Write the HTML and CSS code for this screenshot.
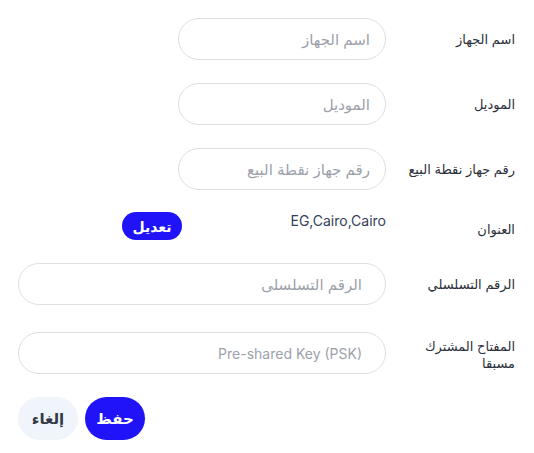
FILE: index.html
```html
<!DOCTYPE html>
<html lang="ar" dir="rtl">
<head>
<meta charset="utf-8">
<link rel="stylesheet" href="styles.css">
</head>
<body>
<form class="form">
  <div class="row">
    <label class="label">اسم الجهاز</label>
    <div class="field"><input class="input input-short" placeholder="اسم الجهاز"></div>
  </div>
  <div class="row">
    <label class="label">الموديل</label>
    <div class="field"><input class="input input-short" placeholder="الموديل"></div>
  </div>
  <div class="row">
    <label class="label">رقم جهاز نقطة البيع</label>
    <div class="field"><input class="input input-short" placeholder="رقم جهاز نقطة البيع"></div>
  </div>
  <div class="row row-address">
    <label class="label label-address">العنوان</label>
    <div class="address">
      <span class="address-text" dir="ltr">EG,Cairo,Cairo</span>
      <button type="button" class="btn-edit">تعديل</button>
    </div>
  </div>
  <div class="row">
    <label class="label">الرقم التسلسلي</label>
    <div class="field"><input class="input" placeholder="الرقم التسلسلى"></div>
  </div>
  <div class="row row-psk">
    <label class="label label-multi">المفتاح المشترك مسبقا</label>
    <div class="field"><input class="input input-latin" placeholder="Pre-shared Key (PSK)"></div>
  </div>
  <div class="actions">
    <button type="button" class="btn btn-primary">حفظ</button>
    <button type="button" class="btn btn-secondary">إلغاء</button>
  </div>
</form>
</body>
</html>
```
FILE: styles.css
```css
* { box-sizing: border-box; }
html, body { margin: 0; background: #ffffff; }
body {
  font-family: "Inter", "Noto Sans", "DejaVu Sans", sans-serif;
  color: #2b2f3a;
}
.form {
  padding: 18px 19px 0 18px;
  display: flex;
  flex-direction: column;
  gap: 23px;
}
.row {
  display: grid;
  grid-template-columns: 129px 1fr;
  align-items: center;
}
.label {
  font-size: 13px;
  line-height: 17px;
  color: #2b2f3a;
  text-align: right;
  padding-left: 14px;
}
.label-multi { align-self: start; padding-top: 6px; line-height: 17px; }
.field { display: flex; }
.input {
  width: 100%;
  height: 42px;
  border: 1px solid #dcdfe4;
  border-radius: 21px;
  padding: 0 23px;
  font-family: inherit;
  font-size: 15px;
  color: #2b2f3a;
  background: #fff;
  outline: none;
}
.input-latin { font-size: 14px; }
.input::placeholder { color: #9ca1ab; }
.input-short { width: 208px; padding: 0 15px; }
.row-address { align-items: start; height: 28px; margin-top: -1px; }
.label-address { padding-top: 9px; }
.address { display: flex; align-items: flex-start; }
.address-text {
  width: 204px;
  font-size: 14px;
  line-height: 18px;
  color: #35415a;
  text-align: right;
}
.btn-edit {
  width: 60px;
  height: 28px;
  border: none;
  border-radius: 14px;
  background: #2013f7;
  color: #fff;
  font-family: inherit;
  font-size: 14px;
  font-weight: 700;
}
.row-psk { margin-top: 4px; }
.actions {
  display: flex;
  justify-content: flex-end;
  gap: 7px;
}
.btn {
  width: 60px;
  height: 43px;
  border: none;
  border-radius: 22px;
  font-family: inherit;
  font-size: 15px;
  font-weight: 700;
}
.btn-primary { background: #2013f7; color: #fff; }
.btn-secondary { background: #f0f4fb; color: #333a46; }
```
